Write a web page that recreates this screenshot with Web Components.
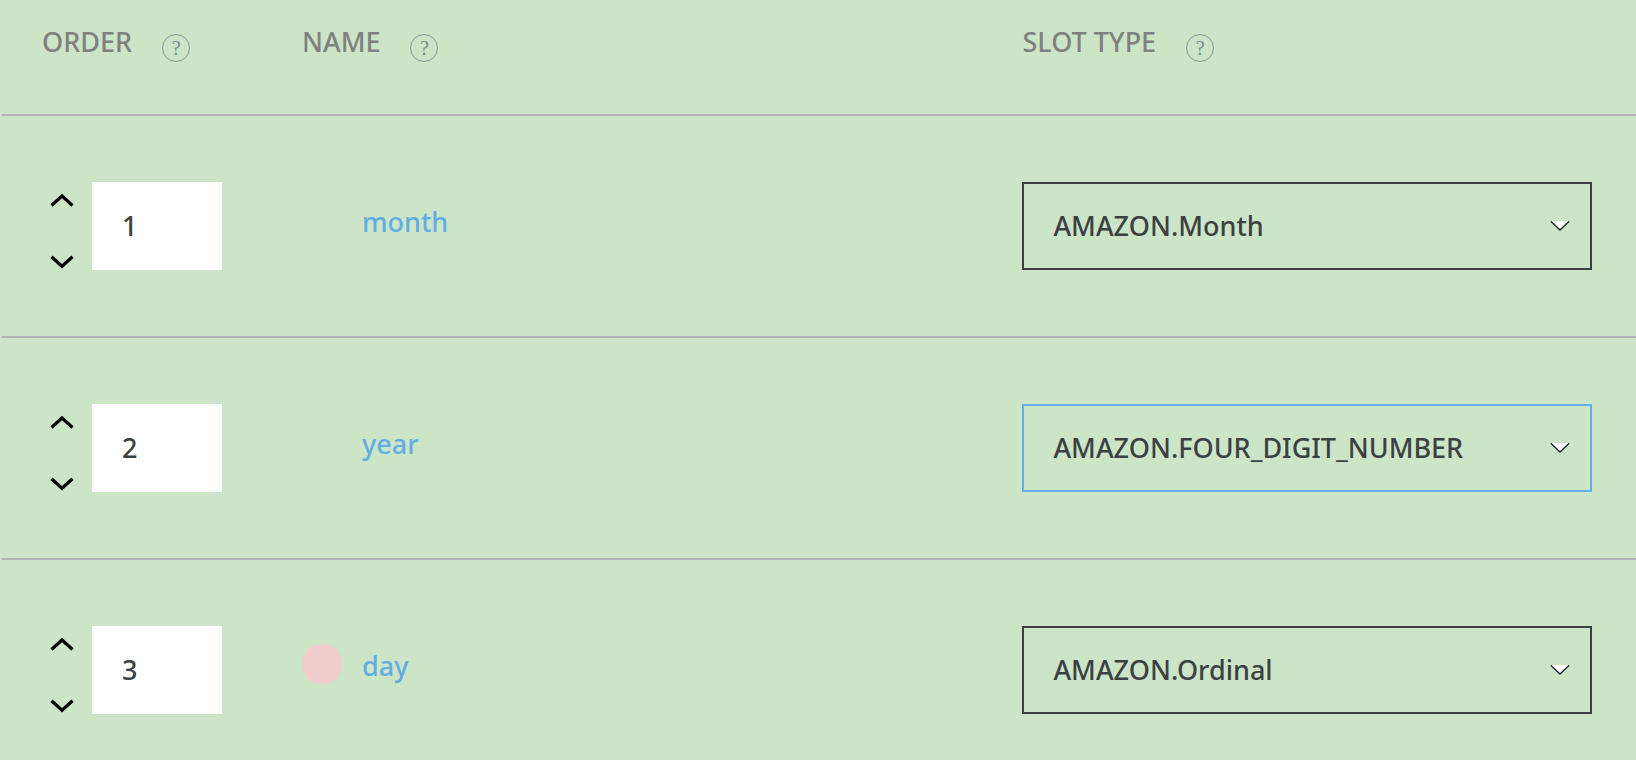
<!DOCTYPE html>
<html lang="en">
<head>
<meta charset="utf-8">
<title>Slots</title>
<style>
  html { height: 100%; background: #cce5c7; overflow: hidden; }
  body {
    margin: 0;
    min-height: 100%;
    font: 500 27px/36px "Noto Sans", sans-serif;
    color: #3b4143;
    --muted: #808080;
    --link: #62ade4;
    --rule: #b2b2b9;
    --ink: #3b4143;
  }
</style>
</head>
<body>
<slot-table></slot-table>
<script>
const define = (name, html, setup) => {
  const template = document.createElement('template');
  template.innerHTML = html;
  customElements.define(name, class extends HTMLElement {
    constructor() {
      super();
      this.attachShadow({ mode: 'open' }).append(template.content.cloneNode(true));
    }
    connectedCallback() { if (setup) setup(this, this.shadowRoot); }
  });
};

define('column-heading', `
  <style>
    :host { display: flex; align-items: flex-start; gap: 30px; color: var(--muted); }
    button {
      box-sizing: border-box; width: 28px; height: 28px; margin: 10px 0 0; padding: 0;
      border: 1px solid #819996; border-radius: 50%; background: none;
      color: #71858a; font: 20px/26px "Liberation Serif", serif; text-align: center;
    }
  </style>
  <span><slot></slot></span><button type="button" aria-label="Help">?</button>`);

define('order-field', `
  <style>
    :host { display: flex; height: 88px; }
    .steps {
      box-sizing: border-box; width: 50px; padding: 12px 0 2px 8px;
      display: flex; flex-direction: column; justify-content: space-between; align-items: flex-start;
    }
    button { border: 0; padding: 0; background: none; height: 12px; }
    svg { display: block; overflow: visible; fill: none; stroke: #000; stroke-width: 3.2; }
    input {
      box-sizing: border-box; width: 130px; height: 88px; padding: 0 30px 2px; border: 0;
      border-radius: 0; background: #fff; color: var(--ink); font: inherit;
    }
  </style>
  <div class="steps">
    <button type="button" aria-label="Move up"><svg width="24" height="12"><path d="M1.500 11.500 12 2l10.500 9.500"/></svg></button>
    <button type="button" aria-label="Move down"><svg width="24" height="12"><path d="M1.500 .8 12 10.300 22.500 .8"/></svg></button>
  </div>
  <input type="text" inputmode="numeric" aria-label="Order">`,
  (el, root) => { root.querySelector('input').value = el.getAttribute('value'); });

define('slot-name', `
  <style>
    :host { display: grid; grid-template-columns: 40px auto; gap: 20px; align-items: center;
            height: 40px; padding-bottom: 12px; }
    i { width: 40px; height: 40px; border-radius: 50%; }
    :host([marked]) i { background: #f2cdce; }
    a { padding-top: 4px; color: var(--link); text-decoration: none; justify-self: start; }
  </style>
  <i></i><a href="#"><slot></slot></a>`);

define('type-select', `
  <style>
    :host { display: grid; align-items: center; }
    select, svg { grid-area: 1 / 1; }
    select {
      appearance: none; box-sizing: border-box; width: 100%; height: 88px; margin: 0;
      padding: 0 60px 0 29px; border: 2px solid var(--ink); border-radius: 0;
      background: none; color: var(--ink); font: inherit; outline: 0;
    }
    :host([active]) select { border-color: var(--link); }
    svg { justify-self: end; margin-right: 22px; pointer-events: none; }
  </style>
  <select aria-label="Slot type"><option></option></select>
  <svg width="20" height="10"><path d="M1 0h18l-9 9z" fill="#fff"/><path d="M.8 .3 10 9 19.200 .3" fill="none" stroke="#1c2430" stroke-width="1.400"/></svg>`,
  (el, root) => { root.querySelector('option').textContent = el.getAttribute('value'); });

define('slot-table', `
  <style>
    :host { display: block; padding-left: 2px; }
    table { width: 100%; table-layout: fixed; border-collapse: separate; border-spacing: 0; }
    .order { width: 260px; }
    .type { width: 40%; }
    th, td { padding: 0 0 0 40px; border-bottom: 2px solid var(--rule); text-align: left; }
    th { height: 90px; padding-top: 24px; vertical-align: top; font-weight: inherit; }
    td { height: 220px; vertical-align: middle; }
    td:last-child { padding-right: 44px; }
  </style>
  <table>
    <colgroup><col class="order"><col><col class="type"></colgroup>
    <thead><tr>
      <th scope="col"><column-heading>ORDER</column-heading></th>
      <th scope="col"><column-heading>NAME</column-heading></th>
      <th scope="col"><column-heading>SLOT TYPE</column-heading></th>
    </tr></thead>
    <tbody>
      <tr>
        <td><order-field value="1"></order-field></td>
        <td><slot-name>month</slot-name></td>
        <td><type-select value="AMAZON.Month"></type-select></td>
      </tr>
      <tr>
        <td><order-field value="2"></order-field></td>
        <td><slot-name>year</slot-name></td>
        <td><type-select active value="AMAZON.FOUR_DIGIT_NUMBER"></type-select></td>
      </tr>
      <tr>
        <td><order-field value="3"></order-field></td>
        <td><slot-name marked>day</slot-name></td>
        <td><type-select value="AMAZON.Ordinal"></type-select></td>
      </tr>
    </tbody>
  </table>`);
</script>
</body>
</html>
